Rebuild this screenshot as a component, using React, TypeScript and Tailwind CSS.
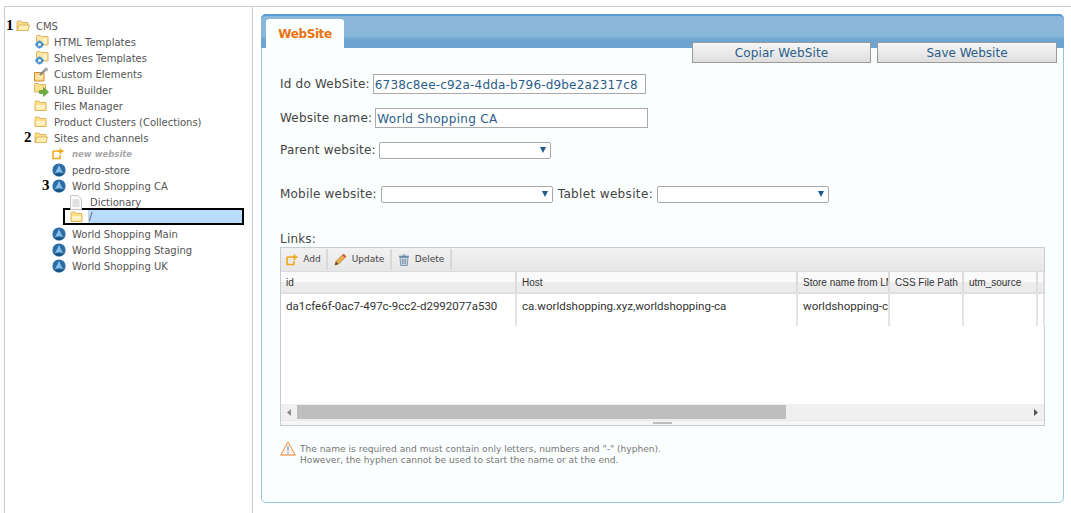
const sans = "font-['DejaVu_Sans',Verdana,sans-serif]";

function Folder({ open = false, className = '' }: { open?: boolean; className?: string }) {
  return (
    <svg width="14" height="12" viewBox="0 0 14 12" className={className}>
      <path d="M1 2.5 L1.5 1 H5 L6 2.5 H12 V10.5 H1 Z" fill="#fbe08c" stroke="#e0b560" strokeWidth="1" />
      {open ? (
        <path d="M1 10.5 L3 5 H13.5 L12 10.5 Z" fill="#fdeeb5" stroke="#e0b560" strokeWidth="1" />
      ) : (
        <path d="M2 5 H11 V9.5 H2 Z" fill="#fff3c4" />
      )}
    </svg>
  );
}

function GearFolder() {
  return (
    <svg width="16" height="14" viewBox="0 0 16 14">
      <path d="M2.5 1.5 L3 .5 H6.5 L7.5 1.5 H14 V10 H2.5 Z" fill="#fbe6a4" stroke="#e0b560" />
      <path d="M9 4 H13 V9 H9 Z" fill="#fff3c4" />
      <circle cx="5.5" cy="9.5" r="2.6" fill="#fff" stroke="#4a90d0" strokeWidth="2" />
      <path d="M5.5 5.5 V7 M5.5 12 V13.5 M1 9.5 H3 M8 9.5 H10" stroke="#4a90d0" strokeWidth="1.6" />
    </svg>
  );
}

function WrenchFolder() {
  return (
    <svg width="15" height="15" viewBox="0 0 15 15">
      <path d="M.5 5.5 H10 V14 H.5 Z" fill="#fbd98a" stroke="#d58a2a" />
      <path d="M2 9 H9 M2 11 H9" stroke="#fff3c4" />
      <path d="M6 8 L11 3" stroke="#8c8c8c" strokeWidth="2.4" />
      <circle cx="12" cy="2.5" r="2" fill="#a8a8a8" />
    </svg>
  );
}

function ArrowFolder() {
  return (
    <svg width="15" height="14" viewBox="0 0 15 14">
      <path d="M.5 1.5 L1 .5 H4.5 L5.5 1.5 H11.5 V9 H.5 Z" fill="#fbe08c" stroke="#e0b560" />
      <path d="M5.5 7.5 H9.5 V4.5 L14.5 9 L9.5 13.5 V10.5 H5.5 Z" fill="#6cae3e" stroke="#4a8a28" strokeWidth=".6" />
    </svg>
  );
}

function Globe() {
  return (
    <svg width="14" height="14" viewBox="0 0 14 14">
      <circle cx="7" cy="7" r="6.6" fill="#2b6ea8" />
      <path d="M7 2 Q5.5 6 3 10 Q7 8.5 11 10 Q8.5 6 7 2 Z" fill="#8fc0e8" />
      <path d="M2.5 11 Q7 9.5 11.5 11 L7 13.5 Z" fill="#17507f" />
    </svg>
  );
}

function NewStar({ size = 12 }: { size?: number }) {
  return (
    <svg width={size} height={size} viewBox="0 0 12 12">
      <path d="M1 3 H6 M1 3 V10.5 H8 V7" fill="none" stroke="#f0a818" strokeWidth="1.6" />
      <path d="M8.5 .5 V6 M6 3.2 H11.5" stroke="#f0a818" strokeWidth="1.8" />
    </svg>
  );
}

function PageIcon() {
  return (
    <svg width="12" height="15" viewBox="0 0 12 15">
      <path d="M.5 .5 H8 L11.5 4 V14.5 H.5 Z" fill="#fafafa" stroke="#c4c4c4" />
      <path d="M2.5 5 H9.5 M2.5 7 H9.5 M2.5 9 H9.5 M2.5 11 H9.5" stroke="#c8c8c8" />
    </svg>
  );
}

function Pencil() {
  return (
    <svg width="13" height="13" viewBox="0 0 13 13">
      <path d="M1 12 L2 8.5 L9.5 1 L12 3.5 L4.5 11 Z" fill="#eeb04a" stroke="#a06a20" strokeWidth=".7" />
      <path d="M9.5 1 L12 3.5 L10.8 4.7 L8.3 2.2 Z" fill="#d9534f" />
      <path d="M1 12 L2 8.5 L4.5 11 Z" fill="#6a4a2a" />
    </svg>
  );
}

function Trash() {
  return (
    <svg width="12" height="12" viewBox="0 0 12 12">
      <path d="M1 2.5 H11" stroke="#6d8aa3" strokeWidth="1.6" />
      <path d="M4.5 1 H7.5" stroke="#6d8aa3" />
      <path d="M2 3.5 H10 L9.3 11.5 H2.7 Z" fill="#c5d3de" stroke="#6d8aa3" strokeWidth=".8" />
      <path d="M4.5 5 V10 M6 5 V10 M7.5 5 V10" stroke="#6d8aa3" strokeWidth=".7" />
    </svg>
  );
}

function Warn() {
  return (
    <svg width="16" height="15" viewBox="0 0 16 15">
      <path d="M8 1 L15.2 14 H.8 Z" fill="#fffaf2" stroke="#f4a468" strokeWidth="1.3" strokeLinejoin="round" />
      <path d="M8 5 V10" stroke="#5b9bd5" strokeWidth="1.3" />
      <path d="M8 11 V12.5" stroke="#5b9bd5" strokeWidth="1.3" />
    </svg>
  );
}

function TreeRow({ indent, icon, label, mark, muted }: { indent: string; icon: React.ReactNode; label: string; mark?: string; muted?: boolean }) {
  return (
    <div className={`flex items-center h-4 ${indent}`}>
      {mark && <span className="w-[10px] -ml-[10px] font-['Liberation_Serif',serif] font-bold text-[15px] leading-none text-black -mt-[1px]">{mark}</span>}
      <span className="w-[20px] flex items-center justify-start shrink-0">{icon}</span>
      {muted ? (
        <span className="text-[8.5px] italic font-bold text-[#a8a8a8]">{label}</span>
      ) : (
        <span>{label}</span>
      )}
    </div>
  );
}

function Field({ label, width, value, mono }: { label: string; width: string; value: string; mono?: boolean }) {
  return (
    <div className="flex items-center">
      <span className="tracking-[0.2px]">{label}</span>
      <div className={`ml-[3px] h-[20px] ${width} border border-[#a9a9a9] bg-white text-[#2a5d8a] flex items-center pl-[1px] pt-[1px] ${mono ? 'tracking-[0.17px]' : 'tracking-[0.3px]'}`}>
        {value}
      </div>
    </div>
  );
}

function Select({ width }: { width: string }) {
  return (
    <div className={`h-[17px] ${width} border border-[#a9a9a9] rounded-[2px] bg-white flex items-center justify-end pr-[4px]`}>
      <svg width="6" height="6" viewBox="0 0 6 6">
        <path d="M0 0 H6 L3 6 Z" fill="#1f5c8c" />
      </svg>
    </div>
  );
}

function ToolButton({ icon, label, width }: { icon: React.ReactNode; label: string; width: string }) {
  return (
    <div className={`flex items-center justify-center gap-[5px] ${width} h-[21px] border-r-2 border-[#d8d8d8]`}>
      {icon}
      <span>{label}</span>
    </div>
  );
}

function HeadCell({ width, label }: { width: string; label: string }) {
  return (
    <div className={`${width} h-full shrink-0 overflow-hidden whitespace-nowrap border-r-2 border-[#dcdcdc] pl-[5px] pt-[3px] bg-gradient-to-b from-[#fafafa] from-50% to-[#ececec] to-50%`}>
      {label}
    </div>
  );
}

function BodyCell({ width, label }: { width: string; label?: string }) {
  return (
    <div className={`${width} h-full shrink-0 overflow-hidden whitespace-nowrap border-r-2 border-[#e4e4e4] pl-[5px] pt-[4px]`}>
      {label}
    </div>
  );
}

export default function App() {
  return (
    <div className={`w-[1071px] h-[513px] bg-white overflow-hidden pt-[6px] pl-[4px] ${sans} text-[#444]`}>
      <div className="flex h-full border-t border-[#cfcfcf]">
        {/* Tree */}
        <div className="w-[249px] shrink-0 border-x border-[#cfcfcf] pt-[11px] text-[10px] text-[#555]">
          <TreeRow indent="pl-[11px]" mark="1" icon={<Folder open />} label="CMS" />
          <TreeRow indent="pl-[29px]" icon={<GearFolder />} label="HTML Templates" />
          <TreeRow indent="pl-[29px]" icon={<GearFolder />} label="Shelves Templates" />
          <TreeRow indent="pl-[29px]" icon={<WrenchFolder />} label="Custom Elements" />
          <TreeRow indent="pl-[29px]" icon={<ArrowFolder />} label="URL Builder" />
          <TreeRow indent="pl-[29px]" icon={<Folder />} label="Files Manager" />
          <TreeRow indent="pl-[29px]" icon={<Folder />} label="Product Clusters (Collections)" />
          <TreeRow indent="pl-[29px]" mark="2" icon={<Folder open />} label="Sites and channels" />
          <TreeRow indent="pl-[47px]" icon={<NewStar />} label="new website" muted />
          <TreeRow indent="pl-[47px]" icon={<Globe />} label="pedro-store" />
          <TreeRow indent="pl-[47px]" mark="3" icon={<Globe />} label="World Shopping CA" />
          <TreeRow indent="pl-[65px]" icon={<PageIcon />} label="Dictionary" />
          <div className="ml-[58px] mr-[8px] -mt-[2px] mb-[1px] h-[17px] border-2 border-black flex items-center">
            <span className="w-[23px] pl-[5px] flex items-center shrink-0"><Folder /></span>
            <span className="flex-1 h-full bg-[#b9dcfd] pl-[1px] leading-[13px]">/</span>
          </div>
          <TreeRow indent="pl-[47px]" icon={<Globe />} label="World Shopping Main" />
          <TreeRow indent="pl-[47px]" icon={<Globe />} label="World Shopping Staging" />
          <TreeRow indent="pl-[47px]" icon={<Globe />} label="World Shopping UK" />
        </div>

        {/* Panel */}
        <div className="flex-1 pl-[8px] pt-[7px]">
          <div className="relative w-[803px] h-[489px] border border-[#9cc7e4] rounded-[5px] bg-[#fbfefe]">
            <div className="h-[34px] -mx-[1px] -mt-[1px] rounded-t-[5px] border-t-2 border-[#5b9bd0] bg-gradient-to-b from-[#8ab7da] from-60% to-[#6ca5d1] to-75% pl-[5px] pt-[3px]">
              <div className="w-[78px] h-[29px] rounded-t-[3px] bg-[#fbfefe] text-[#e8720c] font-bold text-[12px] flex items-center justify-center tracking-[-0.4px] pt-[1px]">WebSite</div>
            </div>
            <div className="absolute left-[430px] top-[27px] flex gap-[6px] text-[12px] text-[#2a5d8a]">
              <button className="w-[179px] h-[21px] border border-[#9a9a9a] bg-gradient-to-b from-[#f6f6f6] to-[#dedede] tracking-[0.1px]">Copiar WebSite</button>
              <button className="w-[180px] h-[21px] border border-[#9a9a9a] bg-gradient-to-b from-[#f6f6f6] to-[#dedede]">Save Website</button>
            </div>

            <div className="pl-[18px] pt-[26px] text-[12px] text-[#444]">
              <Field label="Id do WebSite:" width="w-[273px]" value="6738c8ee-c92a-4dda-b796-d9be2a2317c8" mono />
              <div className="mt-[14px]">
                <Field label="Website name:" width="w-[273px]" value="World Shopping CA" />
              </div>
              <div className="mt-[13px] flex items-center gap-[3px] tracking-[0.2px]">
                <span>Parent website:</span>
                <Select width="w-[172px]" />
              </div>
              <div className="mt-[26px] flex items-center gap-[4px] tracking-[0.2px]">
                <span>Mobile website:</span>
                <Select width="w-[172px]" />
                <span className="ml-[1px] tracking-[0.35px]">Tablet website:</span>
                <Select width="w-[172px]" />
              </div>
              <div className="mt-[29px] leading-[15px] tracking-[0.2px]">Links:</div>

              {/* Links grid */}
              <div className="w-[765px] h-[179px] border border-[#c4cdd0] bg-white">
                <div className="flex items-center h-[24px] bg-gradient-to-b from-[#f2f2f2] to-[#e6e6e6] border-b border-[#dcdcdc] text-[9px] font-['DejaVu_Sans',sans-serif]">
                  <ToolButton width="w-[47px]" icon={<NewStar />} label="Add" />
                  <ToolButton width="w-[64px]" icon={<Pencil />} label="Update" />
                  <ToolButton width="w-[60px]" icon={<Trash />} label="Delete" />
                </div>
                <div className="flex h-[22px] text-[10px] font-['Liberation_Sans',sans-serif] text-[#333] border-b-2 border-[#e0e0e0]">
                  <HeadCell width="w-[236px]" label="id" />
                  <HeadCell width="w-[281px]" label="Host" />
                  <HeadCell width="w-[92px]" label="Store name from LMS" />
                  <HeadCell width="w-[74px]" label="CSS File Path" />
                  <HeadCell width="w-[74px]" label="utm_source" />
                  <HeadCell width="w-[6px]" label="" />
                </div>
                <div className="flex h-[32px] text-[11.5px] font-['Roboto',sans-serif] text-[#333]">
                  <BodyCell width="w-[236px]" label="da1cfe6f-0ac7-497c-9cc2-d2992077a530" />
                  <BodyCell width="w-[281px]" label="ca.worldshopping.xyz,worldshopping-ca" />
                  <BodyCell width="w-[92px]" label="worldshopping-ca" />
                  <BodyCell width="w-[74px]" />
                  <BodyCell width="w-[74px]" />
                  <BodyCell width="w-[6px]" />
                </div>
                <div className="h-[78px]" />
                <div className="flex items-center h-[16px] bg-[#f0f0f0]">
                  <span className="w-[16px] flex justify-center">
                    <svg width="4" height="7" viewBox="0 0 4 7"><path d="M4 0 V7 L0 3.5 Z" fill="#8a8a8a" /></svg>
                  </span>
                  <div className="w-[489px] h-[14px] bg-[#bebebe]" />
                  <div className="flex-1" />
                  <span className="w-[16px] flex justify-center">
                    <svg width="4" height="7" viewBox="0 0 4 7"><path d="M0 0 V7 L4 3.5 Z" fill="#555" /></svg>
                  </span>
                </div>
                <div className="flex justify-center bg-[#f6f6f6] h-[5px] border-t border-[#e8e8e8]">
                  <div className="w-[19px] h-[2px] bg-[#bdbdbd] mt-[1px]" />
                </div>
              </div>

              <div className="mt-[15px] flex items-start gap-[4px] text-[9.1px] leading-[11px] text-[#777]">
                <Warn />
                <div className="pt-[3px]">
                  The name is required and must contain only letters, numbers and "-" (hyphen).
                  <br />
                  However, the hyphen cannot be used to start the name or at the end.
                </div>
              </div>
            </div>
          </div>
        </div>
      </div>
    </div>
  );
}
